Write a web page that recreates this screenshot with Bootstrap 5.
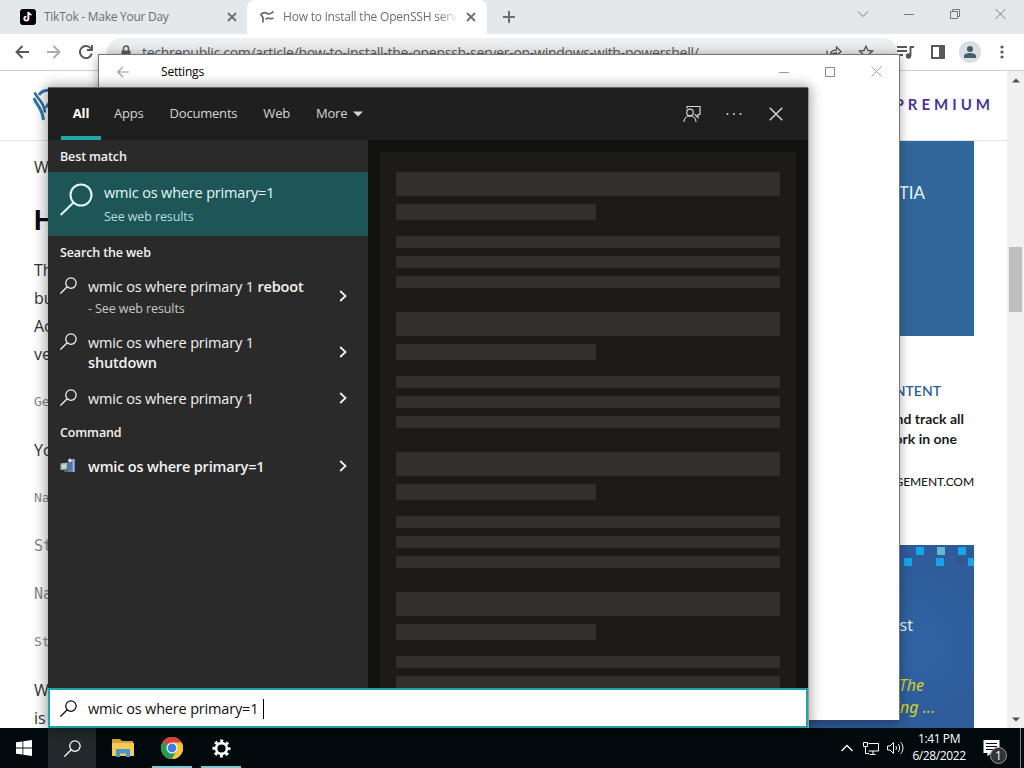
<!DOCTYPE html>
<html lang="en">

<head>
  <meta charset="UTF-8" />
  <meta name="viewport" content="width=device-width, initial-scale=1" />
  <title>Desktop search</title>
  <link href="https://cdn.jsdelivr.net/npm/bootstrap@5.3.3/dist/css/bootstrap.min.css" rel="stylesheet">
  <style>
    body { font-family: "Open Sans", "Noto Sans", sans-serif; font-size: 12px; background: #fff; }
    svg { display: block; flex: none; }
    .desktop { width: 1024px; height: 768px; }
    .desktop, .window, .clip { overflow: hidden; }
    .icon-line { fill: none; stroke: currentColor; }

    /* browser */
    .browser { height: 728px; background: #fff; }
    .tab-strip { height: 34px; background: #e5e8eb; color: #6b6f73; }
    .tab-item { height: 34px; line-height: 34px; white-space: nowrap; }
    .tab-first { width: 247px; padding: 0 9px 0 20px; border-bottom-right-radius: 8px; }
    .tab-current { width: 240px; background: #fff; padding: 0 10px 0 13px; border-radius: 8px 8px 0 0; }
    .tab-first .tab-text { letter-spacing: -.27px; margin-left: 8px; }
    .tab-current .tab-text { width: 176px; margin-left: 8px; letter-spacing: -.2px; -webkit-mask-image: linear-gradient(90deg, #000 88%, transparent); mask-image: linear-gradient(90deg, #000 88%, transparent); }
    .caption-icons { gap: 30px; padding: 7px 18px 0 0; color: #777; }
    .toolbar { height: 37px; border-bottom: 1px solid #cfcfcf; padding: 0 12px 0 11px; color: #55595c; }
    .omnibox { width: 790px; height: 28px; flex: none; margin-left: 14px; border-radius: 14px; background: linear-gradient(#f0f1f2, #e2e3e4 60%); padding: 0 12px; color: #55585b; }
    .omnibox .url { font-size: 14px; letter-spacing: -.28px; margin-left: 11px; white-space: nowrap; }
    .avatar { width: 22px; height: 22px; background: #dadee2; }

    .site { width: 1007px; height: 657px; }
    .site-head { height: 70px; border-bottom: 1px solid #e2e2e6; padding: 0 13px 2px 32px; }
    .premium { font-family: Lato, sans-serif; font-weight: 700; font-size: 15px; letter-spacing: 4px; color: #49349b; }
    .article { width: 300px; padding: 12px 0 0 34px; font-family: "Open Sans", sans-serif; font-size: 16px; color: #333; }
    .article p { line-height: 28px; margin: 0 0 20px; }
    .article h2 { font: 700 27px/40px Inter, sans-serif; color: #0a0a14; margin: 0 0 15px; }
    .article .code-line { font-family: "DejaVu Sans Mono", monospace; font-size: 13px; color: #888; }
    .article .code-big { font-size: 15px; }
    .sidebar { width: 300px; margin-right: 33px; font-family: Lato, sans-serif; }
    .promo { height: 195px; background: #31689b; color: #e9f7ff; padding: 40px 49px 0 0; font-size: 17px; line-height: 24px; }
    .sponsor { height: 209px; color: #1b1b1b; padding-top: 45px; }
    .sponsor-label { font-size: 14px; font-weight: 600; line-height: 20px; color: #2f5f9b; padding-right: 33px; margin-bottom: 8px; }
    .sponsor-text { font-size: 14px; line-height: 20px; font-weight: 700; }
    .sponsor-link { font-size: 12px; font-weight: 500; line-height: 18px; padding-top: 24px; letter-spacing: -.1px; }
    .event { height: 200px; background: radial-gradient(circle at 80% 50%, #3063a3, #2d5593 65%, #304582); font-family: "Noto Sans", sans-serif; font-size: 16px; color: #dcefff; }
    .event-pixels { height: 68px; }
    .event em { color: #d8d21f; display: block; line-height: 22px; }
    .scroll-track { width: 17px; background: #f0f0f0; height: 657px; color: #505050; padding: 7px 0 6px; }
    .scroll-thumb { width: 13px; height: 65px; background: #bfbfbf; }

    /* settings */
    .settings { left: 98px; top: 54px; width: 802px; height: 667px; background: #fff; border: 1px solid #777; border-bottom-color: #34427a; box-shadow: 0 2px 10px rgba(0, 0, 0, .35); }
    .settings-bar { height: 33px; padding: 0 17px 0 18px; color: #999; }
    .settings-name { font-size: 12px; color: #000; margin-left: 32px; letter-spacing: -.2px; }

    /* search */
    .search { left: 48px; top: 88px; width: 760px; height: 640px; color: #f2f2f2; background: #111110; box-shadow: 0 -1px 0 #666, 1px 0 0 #999, 0 0 12px 2px rgba(0, 0, 0, .38); }
    .search-head { height: 52px; background: #1f1f1f; padding: 0 25px 0 13px; font-size: 13px; letter-spacing: -.2px; color: #d4d4d4; }
    .search-head .tab-link { height: 52px; line-height: 50px; padding: 0; }
    .tab-all { width: 40px; text-align: center; color: #fff; font-weight: 700; border-bottom: 4px solid #20a5ab; }
    .results { width: 320px; height: 548px; background: #2a2a2a; }
    .group-name { font-size: 12.5px; font-weight: 600; line-height: 30px; padding: 2px 0 0 12px; letter-spacing: -.13px; }
    .best { height: 64px; background: #1e5556; padding: 9px 0 0 12px; color: #e2fafa; }
    .result-text { font-size: 14.5px; line-height: 20px; letter-spacing: -.17px; }
    .result-note { font-size: 12.5px; color: #c8c8c8; letter-spacing: -.1px; }
    .best .result-note { color: #b4dfdf; line-height: 18px; padding-top: 3px; }
    .best .result-text { line-height: 24px; }
    .hit { padding: 9px 20px 0 12px; min-height: 36px; }
    .hit-tall { height: 56px; }
    .hit .result-text { width: 235px; margin-left: 11px; }
    .hit .chev { margin: 3px 0 0 auto; }
    .hit-tall .chev { margin-top: 13px; }
    .hit b { font-weight: 600; }
    .preview { width: 416px; height: 536px; margin: 12px 12px 0; padding: 20px 16px 0; background: #1c1b19; }
    .ghost { height: 140px; flex: none; }
    .ghost div { background: #332f2e; height: 12px; margin-bottom: 8px; }
    .ghost div:nth-child(1) { height: 24px; }
    .ghost div:nth-child(2) { height: 16px; width: 200px; margin-bottom: 16px; }
    .query { height: 40px; border: 2px solid #20a3a8; background: #fff; color: #111; padding: 1px 10px 0; }
    .query .result-text { margin-left: 11px; }
    .caret { width: 1px; height: 20px; background: #000; margin-left: 5px; }

    /* taskbar */
    .taskbar { height: 40px; background: #000a0c; color: #fff; }
    .task { width: 48px; height: 40px; }
    .task-search { background: #20292b; }
    .task-open { width: 40px; margin: 0 4px 0 5px; border-bottom: 2px solid #76c9d2; padding-top: 2px; }
    .clock { width: 60px; font-size: 12px; line-height: 17px; padding-bottom: 2px; text-align: center; letter-spacing: -.4px; white-space: nowrap; }
    .count-badge { left: 7px; top: 7px; width: 17px; height: 17px; line-height: 15px; font-size: 12px; background: #303437; border: 1px solid #999; text-align: center; }
  </style>
</head>

<body>
  <svg width="0" height="0" class="position-absolute">
    <symbol id="glass" viewBox="0 0 16 16">
      <circle cx="10.3" cy="5.7" r="4.9" fill="none" stroke="currentColor" stroke-width="1.2" />
      <path d="M6.8 9.2L.4 15.6" stroke="currentColor" stroke-width="1.2" />
    </symbol>
    <symbol id="chevron" viewBox="0 0 8 12">
      <path d="M1.2 1L6.5 6 1.2 11" fill="none" stroke="currentColor" stroke-width="1.8" />
    </symbol>
    <symbol id="cross" viewBox="0 0 12 12">
      <path d="M.5.5l11 11M11.5.5l-11 11" fill="none" stroke="currentColor" />
    </symbol>
  </svg>

  <div class="desktop position-relative">

    <div class="browser">
      <div class="tab-strip d-flex">
        <div class="tab-item tab-first d-flex align-items-center">
          <svg width="16" height="16" viewBox="0 0 16 16">
            <rect width="16" height="16" rx="3" fill="#000" />
            <path d="M8.800 3v6.700a2.100 2.100 0 1 1-2.100-2.100M8.800 3c.2 1.700 1.200 2.700 3 2.900" fill="none" stroke="#f15b7d" stroke-width="1.600" />
            <path d="M8.200 2.800v6.700a2 2 0 1 1-2-2M8.200 2.800c.2 1.700 1.200 2.500 3 2.700" fill="none" stroke="#e8ffff" stroke-width="1.600" />
          </svg>
          <span class="tab-text">TikTok - Make Your Day</span>
          <svg class="icon-line ms-auto" width="12" height="12" viewBox="0 0 12 12" stroke-width="1.800"><path d="M2 2l8 8M10 2l-8 8" /></svg>
        </div>
        <div class="tab-item tab-current d-flex align-items-center">
          <svg class="icon-line" width="15" height="14" viewBox="0 0 15 14" stroke-width="1.800">
            <path d="M3 12.500V7.500L.8 4.500C4 1 6 3 8 3.800S11 3.500 13.500 1.500M5.500 9.500c3-3.500 4 .8 8-1.500" />
          </svg>
          <span class="tab-text clip">How to install the OpenSSH serv</span>
          <svg class="icon-line ms-auto" width="12" height="12" viewBox="0 0 12 12" stroke-width="1.800"><path d="M2 2l8 8M10 2l-8 8" /></svg>
        </div>
        <svg class="icon-line align-self-center ms-3" width="12" height="12" viewBox="0 0 12 12" stroke-width="2"><path d="M6 0v12M0 6h12" /></svg>
        <div class="caption-icons d-flex ms-auto">
          <svg class="icon-line me-1" width="12" height="14" viewBox="0 0 12 14"><path d="M1 4.500l5 5 5-5" /></svg>
          <svg class="icon-line me-1" width="12" height="14" viewBox="0 0 12 14"><path d="M1 7.500h10" /></svg>
          <svg class="icon-line me-1" width="12" height="14" viewBox="0 0 12 14"><path d="M1.500 4.500h7v7h-7zM3.500 4.500v-2h7v7h-2" /></svg>
          <svg width="11" height="14"><use href="#cross" /></svg>
        </div>
      </div>

      <div class="toolbar d-flex align-items-center">
        <svg class="icon-line ms-1" width="14" height="14" viewBox="0 0 14 14" stroke-width="1.900"><path d="M14 7H1.500M7.500 1L1.500 7l6 6" /></svg>
        <svg class="icon-line opacity-50" width="14" height="14" viewBox="0 0 14 14" stroke-width="1.900" style="margin-left:18px"><path d="M0 7h12.500M6.500 1l6 6-6 6" /></svg>
        <svg class="icon-line" width="14" height="14" viewBox="0 0 14 14" stroke-width="1.900" style="margin-left:18px"><path d="M11.800 3.500A6 6 0 1 0 12.800 8.500M13 0v5H8" /></svg>
        <div class="omnibox d-flex align-items-center">
          <svg width="10" height="14" viewBox="0 0 10 14" style="margin-left:2px"><path d="M.5 5.500h9V13h-9z" fill="currentColor" /><path d="M2.500 6V3.500a2.500 2.500 0 0 1 5 0V6" class="icon-line" stroke-width="1.500" /></svg>
          <span class="url">techrepublic.com/article/how-to-install-the-openssh-server-on-windows-with-powershell/</span>
          <svg class="icon-line ms-auto" width="16" height="15" viewBox="0 0 16 15" stroke-width="1.300"><path d="M1 5.500v8h12v-2M4.500 10.500c0-4 2-5.500 6-5.500V2l4.500 4.500-4.500 4V8c-3 0-4.800.5-6 2.500z" /></svg>
          <svg class="icon-line" width="16" height="15" viewBox="0 0 16 15" stroke-width="1.400" style="margin:0 11px 0 16px"><path d="M8 1.200l2 4.300 4.700.5-3.500 3.100 1 4.600L8 11.300l-4.200 2.400 1-4.600L1.300 6l4.700-.5z" /></svg>
        </div>
        <svg class="icon-line" width="17" height="14" viewBox="0 0 17 14" stroke-width="1.900"><path d="M0 2h10M0 6h10M0 10h6M13.500 11V2H17" /><circle cx="11.500" cy="11" r="1.700" fill="currentColor" /></svg>
        <svg class="icon-line" width="14" height="14" viewBox="0 0 14 14" stroke-width="2" style="margin-left:17px"><path d="M1 1h12v12H1z" /><path d="M9 1h4v12H9z" fill="currentColor" /></svg>
        <div class="avatar rounded-circle d-flex align-items-center justify-content-center" style="margin-left:14px">
          <svg width="12" height="12" viewBox="0 0 12 12" fill="#455d68"><circle cx="6" cy="3" r="3" /><path d="M0 12V10c0-4 12-4 12 0v2z" /></svg>
        </div>
        <svg width="4" height="14" viewBox="0 0 4 14" fill="currentColor" class="ms-auto me-2"><circle cx="2" cy="2" r="1.600" /><circle cx="2" cy="7" r="1.600" /><circle cx="2" cy="12" r="1.600" /></svg>
      </div>

      <div class="d-flex">
        <div class="site clip">
          <div class="site-head d-flex align-items-center">
            <svg width="34" height="36" viewBox="0 0 34 36" fill="none" stroke="#2f78ac">
              <path d="M7 8C10 3.500 14 2 22 4" stroke-width="3" /><path d="M2 11c2 7 8 9 9.500 22" stroke-width="3" /><path d="M2.500 5.500c4 8 9.500 9 10.500 20" stroke="#296a9c" stroke-width="2.500" /><path d="M14 21c1-4 3-6 8-7" stroke-width="2.500" />
            </svg>
            <span class="premium ms-auto">PREMIUM</span>
          </div>
          <div class="d-flex justify-content-between">
            <div class="article">
              <p>W</p>
              <h2>H</h2>
              <p>Th<br>bu<br>Ac<br>ve</p>
              <p class="code-line">Ge</p>
              <p>Yo</p>
              <p class="code-line">Na</p>
              <p class="code-line code-big">St</p>
              <p class="code-line code-big">Na</p>
              <p class="code-line">St</p>
              <p>W<br>is</p>
            </div>
            <div class="sidebar text-end">
              <div class="promo">STIA</div>
              <div class="sponsor">
                <div class="sponsor-label">NTENT</div>
                <div class="sponsor-text" style="padding-right:10px">nd track all</div>
                <div class="sponsor-text" style="padding-right:17px">ork in one</div>
                <div class="sponsor-link">GEMENT.COM</div>
              </div>
              <div class="event">
                <svg class="event-pixels ms-auto" width="75" height="68" viewBox="0 0 75 68" fill="#16a5e8">
                  <path d="M17 2h8v8h-8zM59 2h8v8h-8zM5 13h8v8H5zM37 13h8v8h-8zM69 13h6v8h-6z" /><path d="M38 2h8v8h-8z" fill="#68b7cc" /><path d="M58 13h7v7h-7z" fill="#3e5489" />
                </svg>
                <div style="padding-right:61px">st</div>
                <em style="padding:37px 50px 0 0">The</em>
                <em style="padding-right:39px">ing ...</em>
              </div>
            </div>
          </div>
        </div>
        <div class="scroll-track d-flex flex-column align-items-center">
          <svg width="8" height="5" viewBox="0 0 8 5" fill="currentColor"><path d="M0 4.500L4 .5l4 4z" /></svg>
          <div class="scroll-thumb" style="margin-top:164px"></div>
          <svg class="mt-auto" width="8" height="5" viewBox="0 0 8 5" fill="currentColor"><path d="M0 .5l4 4 4-4z" /></svg>
        </div>
      </div>
    </div>

    <div class="settings window position-absolute">
      <div class="settings-bar d-flex align-items-center">
        <svg class="icon-line" width="12" height="12" viewBox="0 0 12 12" stroke-width="1.200"><path d="M12 6H.8M6 .8L.8 6 6 11.200" /></svg>
        <span class="settings-name">Settings</span>
        <svg class="icon-line ms-auto" width="10" height="10" viewBox="0 0 10 10"><path d="M0 5.500h10" /></svg>
        <svg class="icon-line" width="10" height="10" viewBox="0 0 10 10" style="margin:0 36px"><path d="M.5.5h9v9h-9z" stroke="#888" /></svg>
        <svg width="11" height="11"><use href="#cross" /></svg>
      </div>
    </div>

    <div class="search position-absolute">
      <div class="search-head nav d-flex">
        <div class="tab-link tab-all">All</div>
        <div class="tab-link" style="margin-left:13px">Apps</div>
        <div class="tab-link" style="margin-left:26px">Documents</div>
        <div class="tab-link" style="margin-left:26px">Web</div>
        <div class="tab-link" style="margin-left:26px">More</div>
        <svg class="align-self-center" style="margin-left:6px" width="10" height="6" viewBox="0 0 10 6" fill="currentColor"><path d="M0 .5h10L5 5.500z" /></svg>
        <svg class="icon-line align-self-center ms-auto" width="18" height="18" viewBox="0 0 18 18" stroke-width="1.200">
          <path d="M4 3.500V1.500h13v8h-2v3l-3-3h-.5" /><circle cx="7" cy="7.500" r="3.300" /><path d="M1 17c0-8 12-8 12 0" />
        </svg>
        <svg class="align-self-center" style="margin-left:25px" width="16" height="4" viewBox="0 0 16 4" fill="currentColor"><circle cx="1.500" cy="2" r="1" /><circle cx="8" cy="2" r="1" /><circle cx="14.500" cy="2" r="1" /></svg>
        <svg class="icon-line align-self-center" style="margin-left:27px" width="14" height="14" viewBox="0 0 14 14" stroke-width="1.500"><path d="M.7.7l12.600 12.600M13.300.7L.7 13.300" /></svg>
      </div>

      <div class="d-flex">
        <div class="results">
          <div class="group-name">Best match</div>
          <div class="best d-flex">
            <svg width="33" height="35" viewBox="0 -2 33 35" class="icon-line" stroke-width="2"><circle cx="21" cy="12" r="10.500" /><path d="M13.500 19.500L.7 32" /></svg>
            <div style="margin-left:11px">
              <div class="result-text">wmic os where primary=1</div>
              <div class="result-note">See web results</div>
            </div>
          </div>
          <div class="group-name">Search the web</div>
          <div class="hit hit-tall d-flex">
            <svg width="17" height="17"><use href="#glass" /></svg>
            <div class="result-text">wmic os where primary 1 <b>reboot</b><div class="result-note" style="line-height:24px">- See web results</div></div>
            <svg class="chev" width="10" height="12"><use href="#chevron" /></svg>
          </div>
          <div class="hit hit-tall d-flex">
            <svg width="17" height="17"><use href="#glass" /></svg>
            <div class="result-text">wmic os where primary 1 <b>shutdown</b></div>
            <svg class="chev" width="10" height="12"><use href="#chevron" /></svg>
          </div>
          <div class="hit d-flex">
            <svg width="17" height="17"><use href="#glass" /></svg>
            <div class="result-text">wmic os where primary 1</div>
            <svg class="chev" width="10" height="12"><use href="#chevron" /></svg>
          </div>
          <div class="group-name">Command</div>
          <div class="hit d-flex">
            <svg width="17" height="17" viewBox="0 -1 17 17">
              <path d="M.5 5.500l7-1v7l-7 .5z" fill="#9fc0b6" /><path d="M2 7l4-.5v3L2 10z" fill="#c9d9d3" /><path d="M8 4.500h4v9H8z" fill="#5574a8" /><path d="M12 1h3v13h-3z" fill="#6d91d0" /><path d="M13.500 1v13" stroke="#a9bfe4" stroke-width=".7" /><circle cx="10" cy="2.500" r="1.900" fill="#d9dccc" /><path d="M4 13h8" stroke="#88a4a0" />
            </svg>
            <div class="result-text"><b>wmic os where primary=1</b></div>
            <svg class="chev" width="10" height="12"><use href="#chevron" /></svg>
          </div>
        </div>

        <div class="preview d-flex flex-column clip">
          <div class="ghost"><div></div><div></div><div></div><div></div><div></div></div>
          <div class="ghost"><div></div><div></div><div></div><div></div><div></div></div>
          <div class="ghost"><div></div><div></div><div></div><div></div><div></div></div>
          <div class="ghost"><div></div><div></div><div></div><div></div><div></div></div>
        </div>
      </div>

      <div class="query d-flex align-items-center">
        <svg width="17" height="17"><use href="#glass" /></svg>
        <span class="result-text">wmic os where primary=1</span>
        <span class="caret"></span>
      </div>
    </div>

    <div class="taskbar d-flex align-items-center">
      <div class="task d-flex align-items-center justify-content-center">
        <svg width="16" height="16" viewBox="0 0 16 16" fill="#fff"><path d="M0 2.300L6.500 1.400v6.200H0zM7.300 1.300L16 0v7.600H7.300zM0 8.400h6.500v6.200L0 13.700zM7.300 8.400H16V16l-8.700-1.300z" /></svg>
      </div>
      <div class="task task-search d-flex align-items-center justify-content-center"><svg width="17" height="17"><use href="#glass" /></svg></div>
      <div class="task d-flex align-items-center justify-content-center" style="width:51px;padding-left:3px">
        <svg width="22" height="18" viewBox="0 0 22 18"><path d="M0 0h8l2 2h11v3H0z" fill="#dba336" /><path d="M0 4h22v13H0z" fill="#f6ca57" /><path d="M4 10h14v8h-4v-3.500H8V18H4z" fill="#4796cd" /></svg>
      </div>
      <div class="task task-open d-flex align-items-center justify-content-center">
        <svg width="22" height="22" viewBox="0 0 22 22">
          <circle cx="11" cy="11" r="11" fill="#f4c534" /><path d="M11 11L1.470 5.500A11 11 0 0 1 20.530 5.500z" fill="#dc4437" /><path d="M1.470 5.500A11 11 0 0 0 11 22l4.800-8.200L11 11z" fill="#279b56" /><path d="M11 5.500h9.530A11 11 0 0 1 11 22l4.760-8.300z" fill="#f4c534" /><circle cx="11" cy="11" r="5.500" fill="#fff" /><circle cx="11" cy="11" r="4.400" fill="#3c7ee8" />
        </svg>
      </div>
      <div class="task task-open d-flex align-items-center justify-content-center">
        <svg width="19" height="19" viewBox="-9.500 -9.500 19 19" fill="none" stroke="#fff">
          <circle r="5.400" stroke-width="2.600" /><circle r="7.600" stroke-width="2.800" stroke-dasharray="3 2.969" stroke-dashoffset="1.500" />
        </svg>
      </div>
      <svg class="icon-line ms-auto" width="12" height="8" viewBox="0 0 12 8" stroke-width="1.300"><path d="M.5 7L6 1.500 11.500 7" /></svg>
      <svg class="icon-line" style="margin-left:10px" width="16" height="14" viewBox="0 0 16 14"><path d="M5.500 2.500h10v7.500h-10M.5 1.500h4v4h-4zM2.500 5.500v7h3.500M10 10v3M6.500 13.500h6" /></svg>
      <svg class="icon-line" style="margin-left:8px" width="17" height="14" viewBox="0 0 17 14"><path d="M.5 5h2.500L6.500 1.500v11L3 9H.5zM8.700 5c1 1 1 3 0 4M11 3c2.200 2 2.200 6 0 8M13.500 1.200c3.300 3 3.300 8.600 0 11.600" /></svg>
      <div class="clock" style="margin-left:5px">1:41 PM<br>6/28/2022</div>
      <div class="position-relative" style="margin:0 20px 0 14px">
        <svg width="17" height="17" viewBox="0 0 17 17"><path d="M.5 0h16v13H8l-3.500 3.500V13h-4z" fill="#fff" /><path d="M3 3.500h11M3 6.500h11M3 9.500h8" stroke="#000a0c" /></svg>
        <span class="count-badge position-absolute rounded-circle">1</span>
      </div>
      <div class="vr h-100 opacity-50" style="margin-right:3px"></div>
    </div>
  </div>

  <script src="https://cdn.jsdelivr.net/npm/bootstrap@5.3.3/dist/js/bootstrap.bundle.min.js"></script>
</body>

</html>
